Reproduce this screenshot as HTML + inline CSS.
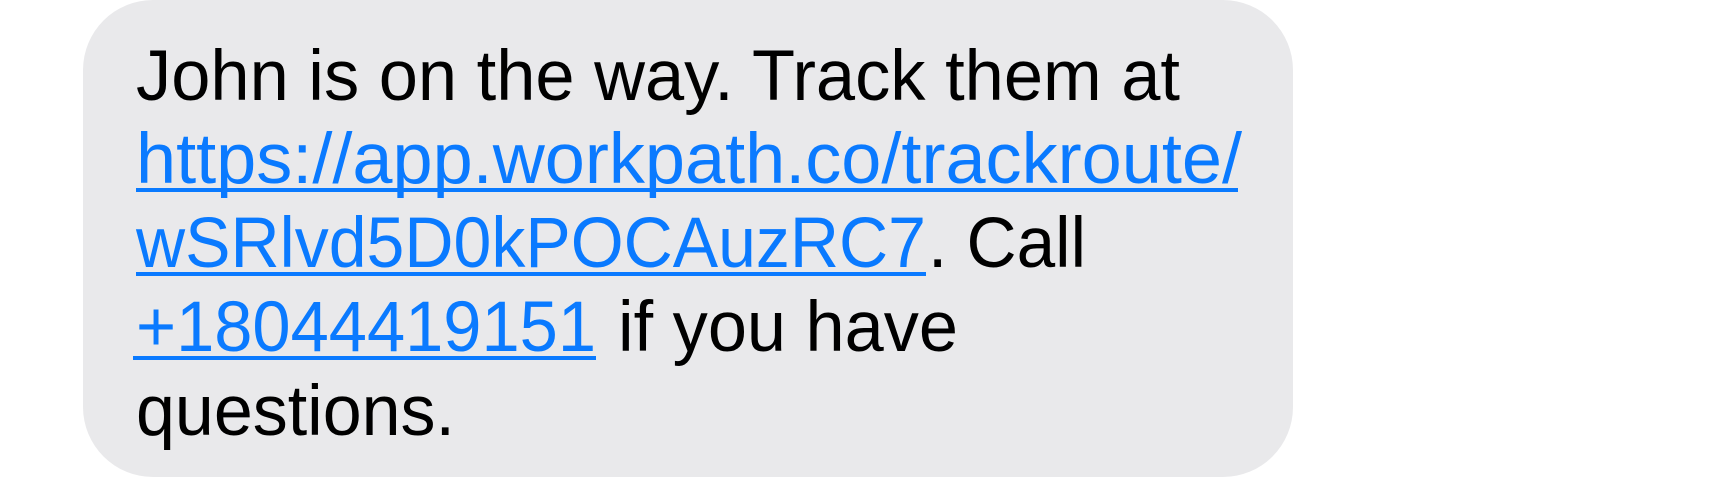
<!DOCTYPE html>
<html><head><meta charset="utf-8"><style>
html,body{margin:0;padding:0;background:#fff;width:1719px;height:483px;overflow:hidden}
svg{display:block}
text{font-family:"Liberation Sans",Arial,sans-serif;font-size:71px}
</style></head><body>
<svg width="1719" height="483" viewBox="0 0 1719 483">
<rect x="83" y="0" width="1210" height="477" rx="70" ry="70" fill="#e9e9eb"/>
<g transform="translate(0,5)">
<text x="136" y="95" fill="#000" textLength="1044" lengthAdjust="spacingAndGlyphs">John is on the way. Track them at</text>
<text x="136" y="178" fill="#0a7aff" textLength="1106" lengthAdjust="spacingAndGlyphs">https://app.workpath.co/trackroute/</text>
<rect x="136" y="183" width="1102" height="4" fill="#0a7aff"/>
<text x="136" y="262" fill="#0a7aff" textLength="790" lengthAdjust="spacingAndGlyphs">wSRlvd5D0kPOCAuzRC7</text>
<rect x="136" y="267" width="790" height="4" fill="#0a7aff"/>
<text x="928" y="262" fill="#000" textLength="158" lengthAdjust="spacingAndGlyphs">. Call</text>
<text x="136" y="346" fill="#0a7aff" textLength="460" lengthAdjust="spacingAndGlyphs">+18044419151</text>
<rect x="133" y="351" width="463" height="4" fill="#0a7aff"/>
<text x="618" y="346" fill="#000" textLength="340" lengthAdjust="spacingAndGlyphs">if you have</text>
<text x="136" y="430" fill="#000" textLength="319" lengthAdjust="spacingAndGlyphs">questions.</text>
</g>
</svg>
</body></html>
